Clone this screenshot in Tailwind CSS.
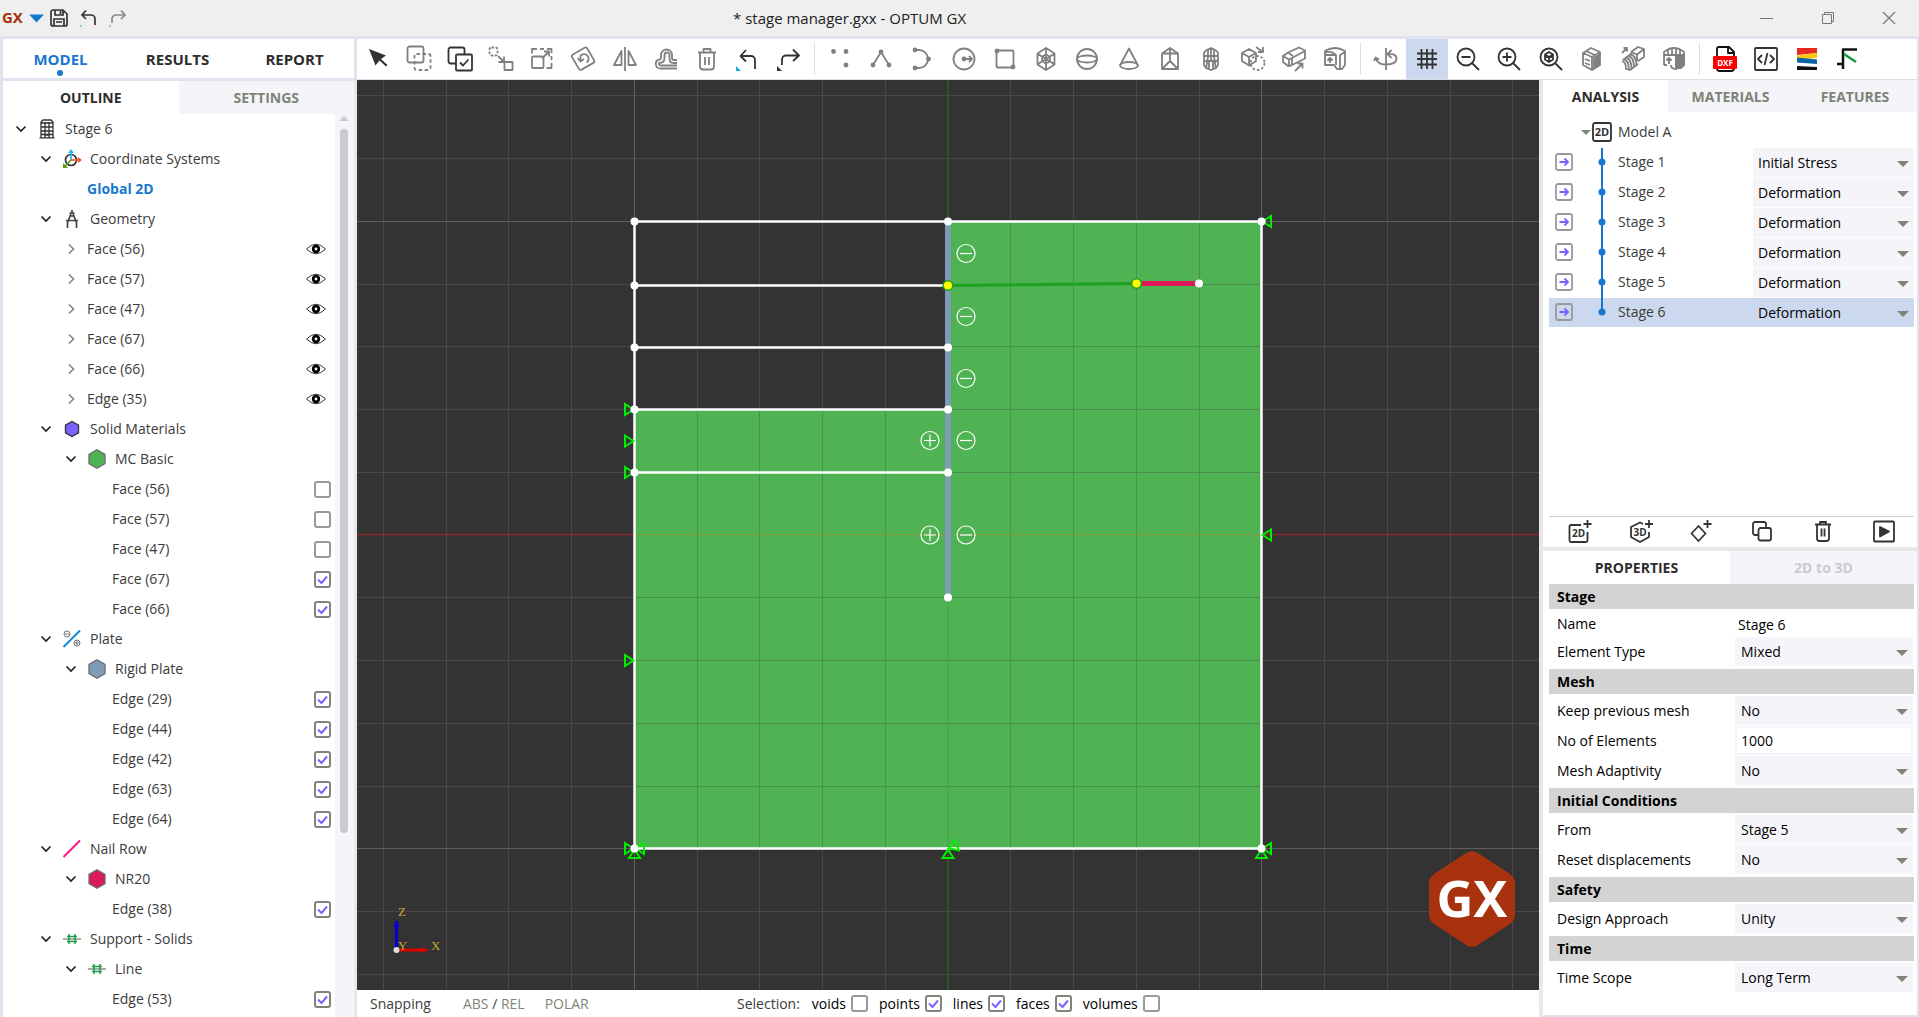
<!DOCTYPE html>
<html lang="en">

<head>
  <meta charset="UTF-8">
  <meta name="viewport" content="width=device-width, initial-scale=1.0">
  <title>* stage manager.gxx - OPTUM GX</title>
  <script src="https://cdn.jsdelivr.net/npm/@tailwindcss/browser@4"></script>
</head>

<body class="flex h-screen flex-col overflow-hidden bg-[#e2e1ee] font-['Open_Sans','Noto_Sans',sans-serif] text-sm text-[#3b3b3b]">

  <!-- Title bar -->
  <header class="flex h-9 shrink-0 items-center bg-[#efefef]">
    <div class="flex w-[357px] items-center pl-[2px]">
      <span class="w-[27px] font-['Noto_Sans',sans-serif] text-[15px] font-bold text-[#a8320e]">GX</span>
      <button aria-label="File menu" class="w-[18px]"><svg class="h-4 w-4" viewBox="0 0 16 16"><path d="M0 4.500h15L7.500 12.500z" fill="#1878cf" /></svg></button>
      <button aria-label="Save" class="ml-[3px]"><svg class="h-[18px] w-[18px]" viewBox="0 0 18 18" fill="none" stroke="#333" stroke-width="1.700"><path d="M3 1h10l4 4v10a2 2 0 0 1-2 2H3a2 2 0 0 1-2-2V3a2 2 0 0 1 2-2zM5 1v5h8V1M4 17v-7h10v7M10.500 2v3M6 13h6" /></svg></button>
      <button aria-label="Undo" class="ml-3"><svg class="h-[18px] w-[18px]" viewBox="0 0 18 18" fill="none" stroke="#333" stroke-width="1.700"><path d="M6 1.500 2 6l4 4M2 6h9a4 4 0 0 1 4 4v6" /><path d="M0 17h2" stroke="#1ea7e8" stroke-width="1" /></svg></button>
      <button aria-label="Redo" class="ml-[11px]"><svg class="h-[18px] w-[18px]" viewBox="0 0 18 18" fill="none" stroke="#8a8a8a" stroke-width="1.700"><path d="m12 1.500 4 4.500-4 4M16 6H7a4 4 0 0 0-4 4v4" /><path d="M0 17h2" stroke-width="1" /></svg></button>
    </div>
    <h1 class="flex-1 pt-[2px] pl-[376px] text-[15px] text-[#222]">* stage manager.gxx - OPTUM GX</h1>
    <button aria-label="Minimize" class="grid w-[61px] place-items-center"><svg class="h-4 w-4" viewBox="0 0 16 16" stroke="#777"><path d="M1 8.500h13" /></svg></button>
    <button aria-label="Restore" class="grid w-[61px] place-items-center"><svg class="h-4 w-4" viewBox="0 0 16 16" fill="none" stroke="#777"><path d="M2.500 4.500h9v9h-9zM4.500 4.500v-2h9v9h-2" /></svg></button>
    <button aria-label="Close" class="grid w-[61px] place-items-center"><svg class="h-4 w-4" viewBox="0 0 16 16" stroke="#777" stroke-width="1.200"><path d="m2 2 12 12M14 2 2 14" /></svg></button>
  </header>

  <div class="flex min-h-0 flex-1 pt-[3px] pl-[3px]">

    <!-- Left panel -->
    <aside class="flex w-[351px] shrink-0 flex-col overflow-hidden bg-white">
      <nav class="flex h-[42px] shrink-0 border-b-[3px] border-[#e2e1ee] text-[15px] font-bold">
        <button class="relative w-[117px] pt-[2px] pr-[2px] text-[#1878cf]">MODEL<span class="absolute bottom-[2px] left-[54px] size-[6px] rounded-full bg-[#1878cf]"></span></button>
        <button class="w-[117px] pt-[2px] pr-[2px] text-[#2d2d2d]">RESULTS</button>
        <button class="w-[117px] pt-[2px] pr-[2px] text-[#2d2d2d]">REPORT</button>
      </nav>
      <div class="grid h-[33px] shrink-0 grid-cols-2 text-sm font-bold">
        <button class="text-[#2d2d2d]">OUTLINE</button>
        <button class="bg-[#f4f4f9] text-[#7c8577]">SETTINGS</button>
      </div>
      <div class="flex min-h-0 flex-1">
        <ul id="tree" class="flex-1"></ul>
        <div class="flex w-[19px] flex-col items-center bg-[#f4f4f9] pr-[2px]">
          <svg class="h-[15px] w-[10px] shrink-0" viewBox="0 0 10 15"><path d="m5 2 5 5H0z" fill="#cbcacd" /></svg>
          <div class="h-[78%] w-2 rounded-full bg-[#cbcacd]"></div>
        </div>
      </div>
    </aside>

    <div class="flex min-w-0 flex-1 flex-col pr-[2px]">

      <!-- Toolbar -->
      <div class="ml-[3px] flex h-[41px] shrink-0 items-center border-b border-[#dcdce4] bg-white">
        <div id="edit-tools" class="grid h-full w-[453px] grid-cols-11"></div>
        <div class="mx-1 h-8 w-px bg-[#dcdcdc]"></div>
        <div id="draw-tools" class="grid h-full w-[537px] grid-cols-13"></div>
        <div class="mx-1 h-8 w-px bg-[#dcdcdc]"></div>
        <div id="view-tools" class="grid h-full w-[330px] grid-cols-8"></div>
        <div class="mx-1 h-8 w-px bg-[#dcdcdc]"></div>
        <div id="file-tools" class="grid h-full w-[165px] grid-cols-4"></div>
      </div>

      <div class="flex min-h-0 flex-1 bg-[#e8e8e8] pl-[3px]">

        <!-- Viewport -->
        <main class="flex min-w-0 flex-1 flex-col bg-white">
          <div class="relative min-h-0 flex-1 overflow-hidden bg-[#333]">
            <svg class="absolute h-full w-full" viewBox="-591 -455 1182 910" preserveAspectRatio="xMidYMid slice" fill="none">
              <path id="grid-minor" stroke="#484848" />
              <path d="M-313.500-455v910M313.500-455v910M-591-313.500h1182M-591 313.500h1182" stroke="#606060" />
              <path d="M0-455v910" stroke="#2a622a" stroke-width="1.500" />
              <path d="M-591-.5h1182" stroke="#8a2a2a" stroke-width="1.500" />

              <path d="M0-313.500h313.500v627h-627V-125.500H0z" fill="#4fb354" />
              <path id="grid-green" stroke="#4b8f4e" />
              <path d="M-313.500-.5h627" stroke="#8a983f" />
              <path d="M0 62v251" stroke="#43a147" />

              <path d="M0-313.500h313.500v627h-627v-627zM-313.500-249.500H0M-313.500-187.500H0M-313.500-125.500H0M-313.500-62.500H0" stroke="#fff" stroke-width="2.500" />
              <path d="M0-312.500V62.500" stroke="#7f9bb5" stroke-width="6" />
              <path d="m0-249.500 188.500-2" stroke="#1fa31f" stroke-width="3" />
              <path d="M188.500-251.500H251" stroke="#dc1a5a" stroke-width="5" />
              <g id="supports" stroke="#00f000" stroke-width="2"></g>
              <g id="nodes" fill="#fff"></g>
              <g fill="#ff0" stroke="#1fa31f" stroke-width="1.500">
                <circle cx="0" cy="-249.500" r="4.800" />
                <circle cx="188.500" cy="-251.500" r="4.800" />
              </g>
              <g id="signs" stroke="#fff" stroke-width="1.200"></g>
            </svg>

            <svg class="absolute bottom-[31px] left-8 h-[64px] w-[60px]" viewBox="0 0 60 64" fill="#c9a92b" font-family="Liberation Serif, serif" font-size="13">
              <path d="M7.500 55V32" stroke="#00d" stroke-width="3" />
              <path d="m7.500 24 3 8h-6z" fill="#00d" />
              <path d="M8 55h24" stroke="#d00" stroke-width="3" />
              <path d="m40 55-8 3v-6z" fill="#d00" />
              <circle cx="7.500" cy="55" r="3" fill="#ddd" />
              <text x="9" y="21">Z</text>
              <text x="9" y="55">Y</text>
              <text x="42" y="55">X</text>
            </svg>

            <svg class="absolute right-6 bottom-[42px] h-[98px] w-[86px]" viewBox="0 0 86 98">
              <path d="M38 2.500Q43-.5 48 2.500L81 24q5 3.500 5 9v32q0 5.500-5 9L48 95.500q-5 3-10 0L5 74q-5-3.500-5-9V33q0-5.500 5-9z" fill="#a8320e" />
              <text x="43" y="67" text-anchor="middle" fill="#fff" font-family="Noto Sans, sans-serif" font-weight="bold" font-size="51">GX</text>
            </svg>
          </div>

          <!-- Status bar -->
          <footer class="flex h-[27px] shrink-0 items-center">
            <div class="flex w-[380px] gap-8 pl-[13px] text-[15px]">
              <button class="text-sm">Snapping</button>
              <button class="text-sm text-[#7c8577]">ABS <span class="text-[#3b3b3b]">/</span> REL</button>
              <button class="-ml-3 text-sm text-[#7c8577]">POLAR</button>
            </div>
            <span class="mr-3">Selection:</span>
            <div id="selection" class="flex gap-[11px] text-black"></div>
          </footer>
        </main>

        <!-- Right panel -->
        <aside class="ml-1 flex w-[374px] shrink-0 flex-col border-b-2 border-[#e2e1ee] bg-white">
          <div class="flex h-8 shrink-0 text-sm font-bold">
            <button class="w-[125px] pt-[2px] text-[#2d2d2d]">ANALYSIS</button>
            <button class="w-[125px] bg-[#f4f4f9] pt-[2px] text-[#7c8577]">MATERIALS</button>
            <button class="flex-1 bg-[#f4f4f9] pt-[2px] text-[#7c8577]">FEATURES</button>
          </div>
          <div class="flex min-h-0 flex-1 flex-col pr-[3px] pl-[6px]">
            <div class="mt-[6px] flex h-[30px] items-center pb-[2px] pl-[31px]">
              <svg class="h-3 w-3" viewBox="0 0 12 12"><path d="M1 4h10L6 9z" fill="#7c8577" /></svg>
              <svg class="h-5 w-5" viewBox="0 0 20 20"><rect x="1" y="1" width="18" height="18" rx="2" fill="none" stroke="#333" stroke-width="1.800" /><text x="10" y="14" text-anchor="middle" font-size="11" font-weight="bold" fill="#333">2D</text></svg>
              <span class="ml-[6px]">Model A</span>
            </div>
            <ul id="stages"></ul>
          </div>
          <div class="mr-[3px] ml-[6px] grid h-[31px] shrink-0 grid-cols-6 border-t border-[#cfcfcf]" id="stage-tools"></div>
          <div class="h-1 shrink-0 bg-[#e8e8e8]"></div>
          <div class="grid h-[33px] shrink-0 grid-cols-2 text-sm font-bold">
            <button class="text-[#2d2d2d]">PROPERTIES</button>
            <button disabled class="bg-[#f4f4f9] text-[#cbcacd]">2D to 3D</button>
          </div>
          <form id="properties" class="h-[431px] shrink-0 pr-[3px] pl-[6px] text-black"></form>
        </aside>
      </div>
    </div>
  </div>

  <script>
    const byId = (id) => document.getElementById(id);

    // ---------- outline tree ----------
    const hexagon = (fill, s) => `<svg class="h-5 w-5" viewBox="0 0 20 20"><path d="${s ? 'M10 2.500 16.500 6.200v7.600L10 17.500 3.500 13.800V6.200z' : 'M10 .8 18 5.400v9.200l-8 4.600-8-4.600V5.400z'}" fill="${fill}" stroke="${s ? '#333' : '#6d6d6d'}" stroke-width="1.300"/></svg>`;
    const supportIcon = '<svg class="h-5 w-5" viewBox="0 0 20 20" fill="none"><path d="M1 10h18" stroke="#909090" stroke-width="1.500"/><path d="M7 5v10M13 5v10M5 7.500h10M5 12.500h10" stroke="#18a04c" stroke-width="1.500"/></svg>';
    const treeIcons = {
      building: '<svg class="h-5 w-5" viewBox="0 0 20 20" fill="none" stroke="#333" stroke-width="1.300"><path d="M4 18.500V3l2-2h8l2 2v15.500M2.500 18.800h15M4 4h12M4 8h12M4 12h12M4 15.500h12M8 3v13M12 3v13M8 18.500V16h4v2.500"/></svg>',
      axes: '<svg class="h-5 w-5" viewBox="0 0 20 20" fill="none" stroke-width="1.700"><circle cx="9" cy="11" r="5.500" stroke="#333"/><path d="M9 11V3" stroke="#29b6f6"/><path d="m9 0 3 4H6z" fill="#29b6f6"/><path d="M9 11h8" stroke="#f4592a"/><path d="m20 11-4-3v6z" fill="#f4592a"/><path d="m9 11-6 6" stroke="#53a318"/><path d="M1 19v-5l5 5z" fill="#53a318"/></svg>',
      compass: '<svg class="h-5 w-5" viewBox="0 0 20 20" fill="none" stroke="#444" stroke-width="1.700"><path d="M10 1v3M8.500 4h3v3h-3zM8.500 6 5.500 14v5M11.500 6l3 8v5M4 11.500h12"/></svg>',
      solid: hexagon('#7b61ff', true),
      mc: hexagon('#4fb354'),
      rigid: hexagon('#7f9bb5'),
      nr: hexagon('#dc1a5a'),
      plate: '<svg class="h-5 w-5" viewBox="0 0 20 20" fill="none" stroke="#777"><path d="M1.500 18 18 1.500" stroke="#1486d8" stroke-width="2"/><circle cx="5" cy="5" r="3"/><path d="M3 5h4M12.500 14h5M15 11.500v5"/><circle cx="15" cy="14" r="3"/></svg>',
      nail: '<svg class="h-5 w-5" viewBox="0 0 20 20"><path d="M1.500 18 18 1.500" stroke="#ff1480" stroke-width="2"/></svg>',
      support: supportIcon,
    };
    const eye = '<svg class="h-5 w-5" viewBox="0 0 20 20"><path d="M.5 10Q10 .5 19.500 10 10 19.500.5 10z" fill="none" stroke="#333"/><circle cx="10" cy="10" r="2.800" fill="none" stroke="#000" stroke-width="2.800"/></svg>';
    const checkbox = (id, on) => `<span class="grid place-items-center">
      <input type="checkbox" id="${id}" ${on ? 'checked' : ''} class="peer col-start-1 row-start-1 size-[17px] appearance-none rounded-[3px] border-2 border-[#999] bg-white checked:border-[#7c8577]">
      <svg class="pointer-events-none col-start-1 row-start-1 hidden h-[11px] w-[11px] peer-checked:block" viewBox="0 0 11 11"><path d="M1 5.500 4.500 9 10 2.500" fill="none" stroke="#7b61ff" stroke-width="2"/></svg></span>`;

    // level, text, state (open / closed / leaf), icon, right-hand control
    const tree = [
      [0, 'Stage 6', 'open', 'building'],
      [1, 'Coordinate Systems', 'open', 'axes'],
      [2, 'Global 2D', 'leaf', '', 'active'],
      [1, 'Geometry', 'open', 'compass'],
      [2, 'Face (56)', 'closed', '', 'eye'],
      [2, 'Face (57)', 'closed', '', 'eye'],
      [2, 'Face (47)', 'closed', '', 'eye'],
      [2, 'Face (67)', 'closed', '', 'eye'],
      [2, 'Face (66)', 'closed', '', 'eye'],
      [2, 'Edge (35)', 'closed', '', 'eye'],
      [1, 'Solid Materials', 'open', 'solid'],
      [2, 'MC Basic', 'open', 'mc'],
      [3, 'Face (56)', 'leaf', '', 'off'],
      [3, 'Face (57)', 'leaf', '', 'off'],
      [3, 'Face (47)', 'leaf', '', 'off'],
      [3, 'Face (67)', 'leaf', '', 'on'],
      [3, 'Face (66)', 'leaf', '', 'on'],
      [1, 'Plate', 'open', 'plate'],
      [2, 'Rigid Plate', 'open', 'rigid'],
      [3, 'Edge (29)', 'leaf', '', 'on'],
      [3, 'Edge (44)', 'leaf', '', 'on'],
      [3, 'Edge (42)', 'leaf', '', 'on'],
      [3, 'Edge (63)', 'leaf', '', 'on'],
      [3, 'Edge (64)', 'leaf', '', 'on'],
      [1, 'Nail Row', 'open', 'nail'],
      [2, 'NR20', 'open', 'nr'],
      [3, 'Edge (38)', 'leaf', '', 'on'],
      [1, 'Support - Solids', 'open', 'support'],
      [2, 'Line', 'open', 'support'],
      [3, 'Edge (53)', 'leaf', '', 'on'],
    ];
    const chevrons = {
      open: '<button aria-label="Collapse" class="grid w-[25px] place-items-center"><svg class="h-3 w-3" viewBox="0 0 12 12"><path d="m1.500 3.500 4.500 4.500 4.500-4.500" fill="none" stroke="#222" stroke-width="1.700"/></svg></button>',
      closed: '<button aria-label="Expand" class="grid w-[25px] place-items-center"><svg class="h-3 w-3" viewBox="0 0 12 12"><path d="m4 1.500 4.500 4.500L4 10.500" fill="none" stroke="#888" stroke-width="1.700"/></svg></button>',
      leaf: '<span class="w-[25px]"></span>',
    };
    const indents = ['pl-[5px]', 'pl-[30px]', 'pl-[55px]', 'pl-[80px]'];
    byId('tree').innerHTML = tree.map(([level, text, state, icon, end], i) => {
      const boxed = end === 'on' || end === 'off';
      const label = boxed ? `<label for="t${i}" class="flex-1 pl-1">${text}</label>`
        : `<span class="flex-1 pl-1 ${end === 'active' ? 'font-bold text-[#1878cf]' : ''}">${text}</span>`;
      return `<li class="flex h-[30px] items-center ${indents[level]}">
        ${chevrons[state]}
        ${icon ? `<span class="grid w-7 place-items-center">${treeIcons[icon]}</span>` : ''}
        ${label}
        ${boxed ? `<span class="pr-1">${checkbox('t' + i, end === 'on')}</span>` : ''}
        ${end === 'eye' ? `<button aria-label="Toggle visibility" class="pr-[9px]">${eye}</button>` : ''}
      </li>`;
    }).join('');

    // ---------- toolbars ----------
    const G = '#808080', D = '#333';
    const icon = (body, stroke = G) => `<svg class="h-6 w-6 overflow-visible" viewBox="0 0 24 24" fill="none" stroke="${stroke}" stroke-width="1.800" stroke-linejoin="round">${body}</svg>`;
    const dot = (x, y, r = 2.4) => `<circle cx="${x}" cy="${y}" r="${r}" fill="${G}" stroke="none"/>`;
    const toolbars = {
      'edit-tools': [
        ['Select', icon('<path d="M3 2 20 8.500l-5 3.500 6.500 6-1.500 1.500-6.500-6L9.500 18.500z" fill="#333" stroke="none"/>', D)],
        ['Add to selection', icon('<rect x=".5" y="-.5" width="16" height="16" rx="2"/><rect x="7.500" y="7" width="16" height="16" rx="2" stroke-dasharray="3.500 2.500"/>')],
        ['Select all', icon('<rect x=".5" y=".5" width="16" height="16" rx="2"/><rect x="8" y="7.500" width="16" height="16" rx="1" fill="#fff"/><path d="m12 15.500 3 3 5.500-6"/>', D)],
        ['Move', icon('<rect x=".5" y=".5" width="8" height="8" rx="2" stroke-dasharray="2.500 1.500"/><path d="m9 9 6 6M15 9.500V15H9.500"/><rect x="15.500" y="15" width="8" height="8"/>')],
        ['Scale', icon('<rect x="2" y="9.500" width="11.500" height="11.500" rx="1"/><path d="M2 6.500V2h5M10 2h4M17 2h4.500v4M21.500 9v4M21.500 16v5h-5"/><path d="m12 11.500 7-7M14 4.500h5v5"/>')],
        ['Rotate', icon('<rect x="3.500" y="3" width="17.500" height="17.500" rx="2" transform="rotate(-30 12 12)"/><path d="M15.500 15.500a4.500 4.500 0 1 0-6-6.500V14M6.500 11l3 3.500 3.500-2.500"/>')],
        ['Mirror', icon('<path d="M12 0v24M8.500 4v14H1zM15.500 4v14H23z"/>')],
        ['Offset', icon('<path d="M23 21.500H6A4.500 4.500 0 0 1 5 12.700q2-.2 2-2.200V8a5.500 5.500 0 0 1 11 0v3q0 2 2 2h3M23 18.500H6.500q-2-.5-1.500-2.500 5.500 0 5.500-5V8a2.500 2.500 0 0 1 5 0v4q0 4 4 4H23"/>')],
        ['Delete', icon('<path d="M3 5.500h18M8.500 5.500V2h7v3.500M5 5.500v14q0 3 3 3h8q3 0 3-3v-14M10 10v8M14 10v8"/>')],
        ['Undo', icon('<path d="m10 3-5.500 6 5.500 5.500M4.500 9H15a4 4 0 0 1 4 4v9"/><path d="M0 19v5h5z" fill="#1ea7e8" stroke="none"/>', D)],
        ['Redo', icon('<path d="m16 2.500 6 6-6 5.500M22 8.500H9a4 4 0 0 0-4 4V18"/><path d="M0 19v5h5z" fill="#333" stroke="none"/>', D)],
      ],
      'draw-tools': [
        ['Point', icon(dot(5.5, 4.5) + dot(18, 4.5) + dot(18, 18))],
        ['Line', icon('<path d="m4 18 8-13 8 13"/>' + dot(12, 5) + dot(4, 18) + dot(20, 18))],
        ['Arc', icon('<path d="M5 3h4a9 9 0 0 1 0 18H5"/>' + dot(5, 3) + dot(18.5, 12) + dot(5, 21))],
        ['Circle', icon('<circle cx="12" cy="12" r="10.500"/><path d="M12 12h8M17 9l3 3-3 3"/>' + dot(12, 12))],
        ['Rectangle', icon('<rect x="3.500" y="3.500" width="17" height="17" rx="1"/>' + dot(4, 4) + dot(20, 20))],
        ['Box', icon('<path d="M12 1 20.500 6.500v11L12 23l-8.500-5.500v-11zM12 1v22M4 7l8 5 8-5M4 17l8-5 8 5"/><circle cx="12" cy="12" r="4"/>')],
        ['Sphere', icon('<circle cx="12" cy="12" r="10"/><ellipse cx="12" cy="12" rx="10" ry="3.500"/>')],
        ['Cone', icon('<path d="M3 18.500 12 1.500l9 17"/><ellipse cx="12" cy="18.500" rx="9" ry="3.500"/>')],
        ['Wedge', icon('<path d="M4 6.500 12 1l8 5.500V22H4zM4 6.500h16M12 1v13M4 22l8-8 8 8"/>')],
        ['Cylinder', icon('<path d="M5 6q0-2 7-5 7 3 7 5v12q-1 3-7 5-6-2-7-5zM5 9h14M9 2v8l-2 12M15 2v8l2 12M12 1v12M5 14h14M10 14v8M14 14v8"/>')],
        ['Copy solid', icon('<path d="m8 2 7 4v8l-7 4.500L1 14V6zM1 6l7 4 7-4M8 10v8"/><circle cx="16.500" cy="16" r="7" stroke-dasharray="2.500 2"/><path d="m15 0 7 5M22 0v5h-5"/>')],
        ['Extrude', icon('<path d="m1 9 5-3.500L17 .5l6 3v8L9 18.500l-3 .5-5-4zM1 9l6 3.500L23 4M7 12.500V19M6 5.500l5 3.500M10 11v7M13 24l7-7M15.500 16.500H20.500v5"/>')],
        ['Revolve', icon('<path d="M2 8V4q10-6 20 0v14l-3 4h-5l-3-4H2V8h11v10M7 16v-5M4.500 13.500 7 11l2.500 2.500M17 22V8l5-3M2 6q6-3 11 2"/>')],
      ],
      'view-tools': [
        ['Orbit', icon('<path d="M12 1v22M1.500 11q2 6.500 10 6.500 11 0 11-6 0-5-8-4.500M17.500 3l-4 4 4 4M0 14l1.500-3.500L5 12.500"/>')],
        ['Grid', icon('<path d="M6.500 2v20M12 2v20M17.500 2v20M2 6.500h20M2 12h20M2 17.500h20"/>', D), true],
        ['Zoom out', icon('<circle cx="10" cy="10" r="8.500"/><path d="m16 16 7 7M5.500 10h9"/>', D)],
        ['Zoom in', icon('<circle cx="10" cy="10" r="8.500"/><path d="m16 16 7 7M5.500 10h9M10 5.500v9"/>', D)],
        ['Zoom to fit', icon('<circle cx="10" cy="10" r="8.500"/><path d="m16 16 7 7"/><path d="m10 5 4 2.500v5L10 15l-4-2.500v-5zM6 7.500l4 2.500 4-2.500M10 10v5M7 10h6"/>', D)],
        ['Section', icon('<path d="m3 6 8-5 9 4v13l-8 5-9-5zM3 6l9 4 8-5M12 10v13"/><path d="m14 11 5-3v10l-5 3z" fill="#808080"/><path d="m6 4 9 4M5 12l5 2M5 16l5 2"/>')],
        ['Explode', icon('<path d="m10 5 7-5 6 2v8l-6 4M17 0v0M10 5l6 2.500V14M16 7.500 23 2M1 6l5-5M2.500 1H6v3.500"/><path d="m2 13 9-7M2 12q6 1 6 11M4.500 10.500q6 1 6 11M7 9q6 1 6 11M9.500 7.500q6 1 6 11M1 14q4 1 4 8l4 1 8-6" stroke-width="1.800"/>')],
        ['Cut view', icon('<path d="M2 18V5q10-8 20 0v13h-8V8H2M2 18h3M7 17v-6M4.500 13.500 7 11l2.500 2.500M9 18q0 4 5 4l3-2"/><path d="M14 8h8v10l-3 3h-5z" fill="#808080"/><path d="M6 3v4M10 2v5M14 2v6M18 3v5"/>')],
      ],
      'file-tools': [
        ['DXF export', icon('<path d="M4 8V2q0-2 2-2h10l5 5v16q0 3-3 3H6q-2 0-2-3zM15 0v6h6" stroke="#111"/><rect x="0" y="9" width="24" height="13" rx="1" fill="#f00" stroke="none"/><text x="12" y="18.500" text-anchor="middle" fill="#fff" stroke="none" font-size="8" font-weight="bold">DXF</text>')],
        ['Script', icon('<rect x="1" y="1" width="22" height="22" rx="1"/><path d="m8 8-4 4 4 4M16 8l4 4-4 4M13.500 6l-3 12"/>', D)],
        ['Results colors', icon('<g stroke="none"><path d="M2 1h20v5L2 8z" fill="#e8281d"/><path d="m2 8.500 20-2.500v5L2 13z" fill="#fdc510"/><path d="m2 10.500 20 2v4.500L2 15.500z" fill="#0b66a8"/><path d="m2 19 20 1v3H2z" fill="#111"/></g>')],
        ['Support curve', icon('<path d="M1 17h7M7 22V2.500h14" stroke="#111" stroke-width="2.500"/><path d="m8 7 12 8" stroke="#159947" stroke-width="2.500"/>')],
      ],
      'stage-tools': [
        ['Add 2D model', icon('<path d="M14 5H4q-1.500 0-1.500 1.500v14Q2.500 22 4 22h15q1.500 0 1.500-1.500V12M16.500 4h8M20.500 0v8"/><text x="11.500" y="17" text-anchor="middle" fill="#333" stroke="none" font-size="10" font-weight="bold">2D</text>', D)],
        ['Add 3D model', icon('<path d="M15 4 12 2.500 3 7v10l9 5 9-5v-5M17 4h8M21 0v8"/><text x="12" y="16" text-anchor="middle" fill="#333" stroke="none" font-size="10" font-weight="bold">3D</text>', D)],
        ['Add stage', icon('<path d="m9.500 6 7 7.500-7 7.500-7-7.500zM14.500 4h8M18.500 0v8"/>', D)],
        ['Duplicate', icon('<rect x="3" y="2" width="13" height="13" rx="2"/><rect x="8.500" y="8" width="12.500" height="12.500" rx="2" fill="#fff"/>', D)],
        ['Delete stage', icon('<path d="M4 4.500h16M9 4.500V2h6v2.500M6 4.500v14q0 2.500 2.500 2.500h7q2.500 0 2.500-2.500v-14M10.500 8.500v8M13.500 8.500v8"/>', D)],
        ['Run', icon('<rect x="2" y="1.500" width="20" height="20" rx="1"/><path d="M8 7v9.500l9-5z" fill="#333"/>', D)],
      ],
    };
    for (const [id, tools] of Object.entries(toolbars)) {
      byId(id).innerHTML = tools.map(([name, svg, active]) =>
        `<button title="${name}" aria-label="${name}" class="grid place-items-center ${active ? 'bg-[#cbd8ee]' : ''}">${svg}</button>`).join('');
    }

    // ---------- selection filters ----------
    byId('selection').innerHTML = [['voids', 0], ['points', 1], ['lines', 1], ['faces', 1], ['volumes', 0]].map(([name, on]) =>
      `<label for="sel-${name}" class="flex items-center gap-[5px]">${name}${checkbox('sel-' + name, on)}</label>`).join('');

    // ---------- model canvas ----------
    const step = 62.75;
    let minor = '', inner = '';
    for (let i = -9; i <= 9; i++) {
      const p = Math.floor(i * step) + 0.5;
      if (i % 5) {
        minor += `M${p}-455v910`;
        if (Math.abs(i) < 8) minor += `M-591 ${p}h1182`;
      }
      if (i && Math.abs(i) < 5) {
        inner += `M${p} ${i < 0 ? -125.5 : -313.5}V313.500`;
        inner += `M${i < -2 ? 0 : -313.5} ${p}H313.500`;
      }
    }
    byId('grid-minor').setAttribute('d', minor);
    byId('grid-green').setAttribute('d', inner);

    const nodes = [[-313.5, -313.5], [-313.5, -249.5], [-313.5, -187.5], [-313.5, -125.5], [-313.5, -62.5], [-313.5, 313.5],
      [0, -313.5], [0, -187.5], [0, -125.5], [0, -62.5], [0, 62.5], [313.5, -313.5], [313.5, 313.5], [251, -251.5]];
    byId('nodes').innerHTML = nodes.map(([x, y]) => `<circle cx="${x}" cy="${y}" r="4"/>`).join('');

    // supports: position and rotation of a triangle whose tip is on the point
    const supports = [[-313.5, -125.5, 0], [-313.5, -94, 0], [-313.5, -62.5, 0], [-313.5, 125.5, 0], [-313.5, 313.5, 0],
      [-313.5, 313.5, 180], [-313.5, 313.5, -90], [0, 313.5, 160], [0, 313.5, -90],
      [313.5, 313.5, 180], [313.5, 313.5, -90], [313.5, -313.5, 180], [313.5, 0, 180]];
    byId('supports').innerHTML = supports.map(([x, y, r]) =>
      `<path d="M-1 0-9.500-5.500v11z" transform="translate(${x} ${y}) rotate(${r})"/>`).join('');

    const signs = [[18, -281.5], [18, -218.5], [18, -156.5], [18, -94.5], [18, 0], [-18, -94.5, 1], [-18, 0, 1]];
    byId('signs').innerHTML = signs.map(([x, y, plus]) =>
      `<circle cx="${x}" cy="${y}" r="9"/><path d="M${x - 6} ${y}h12${plus ? `M${x} ${y - 6}v12` : ''}"/>`).join('');

    // ---------- stages ----------
    const caret = '<svg class="pointer-events-none absolute top-[10px] right-1 h-3 w-[14px]" viewBox="0 0 14 12"><path d="M1 3h12L7 9z" fill="#7c8577"/></svg>';
    byId('stages').innerHTML = ['Initial Stress', 'Deformation', 'Deformation', 'Deformation', 'Deformation', 'Deformation'].map((type, i) => `
      <li class="flex items-start ${i === 5 ? 'h-[29px] bg-[#cbd8ee]' : 'h-[30px]'}">
        <button aria-label="Go to stage ${i + 1}" class="ml-[6px] pt-[5px]"><svg class="h-[18px] w-[18px]" viewBox="0 0 18 18" fill="none"><rect x="1" y="1" width="16" height="16" rx="2" stroke="#999" stroke-width="1.800"/><path d="M4.500 9h8M9.500 5.500 13 9l-3.500 3.500" stroke="#7b61ff" stroke-width="1.800"/></svg></button>
        <svg class="ml-[25px] h-[30px] w-2" viewBox="0 0 8 30"><path d="${i === 5 ? 'M4 0v14' : 'M4 0v30'}" stroke="#1878cf" stroke-width="2"/><circle cx="4" cy="14" r="3.500" fill="#1878cf"/></svg>
        <label for="stage-${i}" class="ml-3 flex-1 pt-1">Stage ${i + 1}</label>
        <span class="relative"><select id="stage-${i}" class="h-[29px] w-[161px] appearance-none pl-[5px] text-black ${i === 5 ? 'bg-[#cbd8ee]' : 'bg-[#f4f4f9]'}"><option>${type}</option></select>${caret}</span>
      </li>`).join('');

    // ---------- properties ----------
    const props = [
      ['Stage'],
      ['Name', 'Stage 6', 'text'],
      ['Element Type', 'Mixed'],
      ['Mesh'],
      ['Keep previous mesh', 'No'],
      ['No of Elements', '1000', 'number'],
      ['Mesh Adaptivity', 'No'],
      ['Initial Conditions'],
      ['From', 'Stage 5'],
      ['Reset displacements', 'No'],
      ['Safety'],
      ['Design Approach', 'Unity'],
      ['Time'],
      ['Time Scope', 'Long Term'],
    ];
    byId('properties').innerHTML = props.map(([label, value, type], i) => {
      if (!value) return `<h2 class="mb-[2px] flex h-[25px] items-center bg-[#d3d3d3] pl-2 font-bold ${i ? 'mt-[2px]' : ''}">${label}</h2>`;
      let field = `<select id="p${i}" class="h-[29px] w-[178px] appearance-none bg-[#f4f4f9] pl-[6px]"><option>${value}</option></select>${caret}`;
      if (type === 'text') field = `<input id="p${i}" value="${value}" class="h-[26px] w-[178px] pl-[3px]">`;
      if (type === 'number') field = `<input id="p${i}" value="${value}" class="h-[29px] w-[178px] border-2 border-[#f4f4f9] pl-1">`;
      return `<div class="flex items-start pl-2 ${type === 'text' ? 'h-[26px]' : 'h-[30px]'}"><label for="p${i}" class="flex-1 ${type === 'text' ? 'pt-[3px]' : 'pt-[5px]'}">${label}</label><span class="relative mr-px">${field}</span></div>`;
    }).join('');
  </script>
</body>

</html>
